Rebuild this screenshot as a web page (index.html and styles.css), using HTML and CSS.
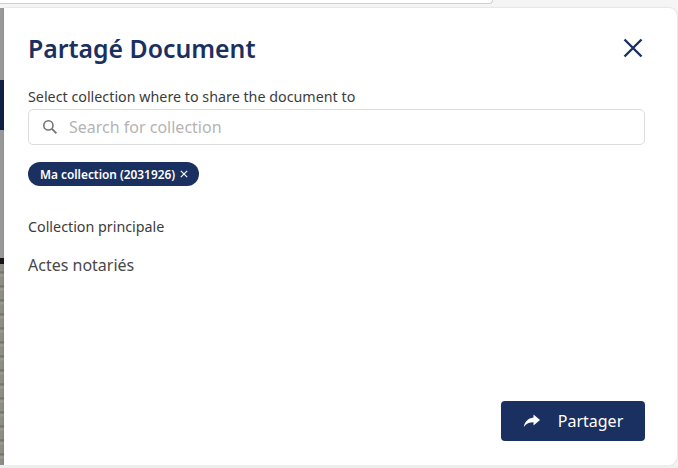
FILE: index.html
```html
<!DOCTYPE html>
<html lang="fr">
<head>
  <meta charset="UTF-8">
  <title>Partagé Document</title>
  <link rel="stylesheet" href="styles.css">
</head>
<body>
  <div class="top-bar">
    <div class="top-field"></div>
  </div>

  <div class="main">
    <!-- bout de page visible derriere la modale -->
    <div class="strip">
      <div class="strip-gray"></div>
      <div class="strip-navy"></div>
      <div class="strip-gray strip-long"></div>
      <div class="strip-black"></div>
      <div class="strip-photo"></div>
    </div>

    <div class="modal">
      <div class="modal-head">
        <h1>Partagé Document</h1>
        <svg class="close" width="20" height="20" viewBox="0 0 20 20">
          <path d="M1.5 1.5L18.5 18.5M18.5 1.5L1.5 18.5" stroke="#1a3060" stroke-width="2.4" fill="none"/>
        </svg>
      </div>

      <p class="label">Select collection where to share the document to</p>
      <div class="search">
        <svg width="16" height="16" viewBox="0 0 16 16">
          <circle cx="6.4" cy="6.4" r="4.6" stroke="#757575" stroke-width="1.6" fill="none"/>
          <path d="M9.9 9.9L14.4 14.4" stroke="#757575" stroke-width="1.8" fill="none"/>
        </svg>
        <span>Search for collection</span>
      </div>

      <div class="chip">
        <span>Ma collection (2031926)</span>
        <svg width="8" height="8" viewBox="0 0 8 8">
          <path d="M.8.8L7.2 7.2M7.2.8L.8 7.2" stroke="#fff" stroke-width="1.1" fill="none"/>
        </svg>
      </div>

      <p class="section">Collection principale</p>
      <p class="item">Actes notariés</p>

      <div class="actions">
        <button class="btn-share">
          <svg width="18" height="14" viewBox="0 0 18 14">
            <path d="M10.5 0.5L17 6L10.5 11.5V8.2C6.5 8.2 3.2 9.6 0.8 13C1.6 8 4.8 4 10.5 3.4Z" fill="#fff"/>
          </svg>
          Partager
        </button>
      </div>
    </div>
  </div>

  <div class="bottom-bar"></div>
</body>
</html>
```

FILE: styles.css
```css
* {
  box-sizing: border-box;
}

html, body {
  height: 100%;
}

body {
  margin: 0;
  background: #f5f5f5;
  font-family: "Noto Sans", sans-serif;
  color: #3c3c3c;
  display: flex;
  flex-direction: column;
  overflow: hidden;
}

.top-bar {
  height: 8px;
  flex: none;
}

.top-field {
  width: 493px;
  height: 4px;
  background: #fff;
  border-bottom: 1px solid #cfcfcf;
  border-right: 1px solid #cfcfcf;
  border-bottom-right-radius: 8px;
}

.main {
  flex: 1;
  display: flex;
  min-height: 0;
}

.strip {
  width: 4px;
  flex: none;
  display: flex;
  flex-direction: column;
}

.strip-gray {
  height: 72px;
  background: #999;
}

.strip-long {
  height: 128px;
}

.strip-navy {
  height: 50px;
  background: #0f2145;
}

.strip-black {
  height: 6px;
  background: #151515;
}

.strip-photo {
  flex: 1;
  background: repeating-linear-gradient(180deg, #8f8d84 0, #8f8d84 7px, #6f6e68 8px, #a09e95 11px, #8b8980 14px);
}

.modal {
  flex: 1;
  background: #fff;
  margin-right: 1px;
  border-radius: 0 8px 8px 0;
  box-shadow: 0 0 2px rgba(0, 0, 0, 0.2);
  padding: 0 32px 24px 24px;
  display: flex;
  flex-direction: column;
}

.modal-head {
  display: flex;
  justify-content: space-between;
  align-items: center;
  height: 79px;
  padding-right: 2px;
}

.modal-head h1 {
  margin: 0;
  font-size: 24.8px;
  font-weight: 600;
  color: #1a3060;
}

.label {
  margin: 0 0 2px;
  font-size: 14.3px;
  line-height: 20px;
}

.search {
  height: 36px;
  border: 1px solid #dcdcdc;
  border-radius: 5px;
  padding-left: 13px;
  display: flex;
  align-items: center;
  gap: 11px;
  font-size: 16px;
  color: #b4b4b4;
}

.chip {
  align-self: flex-start;
  margin-top: 17px;
  height: 24px;
  padding: 0 11px 0 12px;
  border-radius: 12px;
  background: #1a3060;
  color: #fff;
  font-size: 11.85px;
  font-weight: 600;
  display: flex;
  align-items: center;
  gap: 5px;
}

.section {
  margin: 31px 0 0;
  font-size: 14.3px;
  line-height: 20px;
}

.item {
  margin: 17px 0 0;
  font-size: 16px;
  line-height: 22px;
  color: #484848;
}

.actions {
  margin-top: auto;
  display: flex;
  justify-content: flex-end;
}

.btn-share {
  width: 144px;
  height: 40px;
  border: none;
  border-radius: 4px;
  background: #1a3060;
  color: #fff;
  font-family: inherit;
  font-size: 16px;
  display: flex;
  align-items: center;
  justify-content: center;
  gap: 17px;
}

.bottom-bar {
  height: 3px;
  flex: none;
  background: #eee;
}
```
